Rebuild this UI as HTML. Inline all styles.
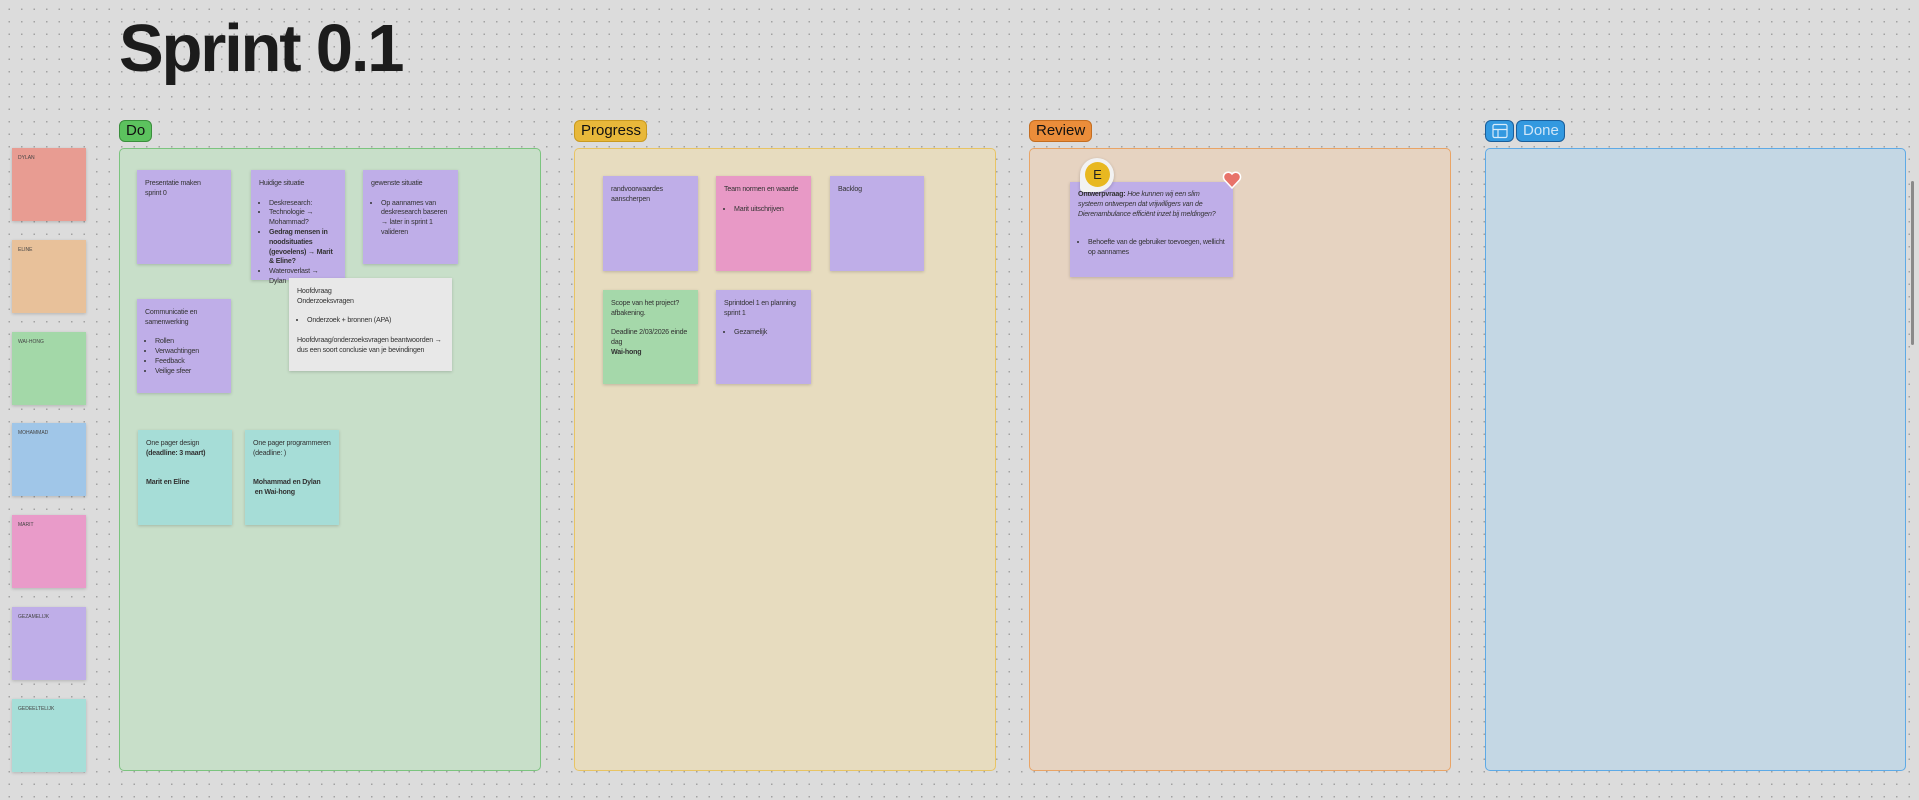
<!DOCTYPE html>
<html><head><meta charset="utf-8"><style>
*{margin:0;padding:0;box-sizing:border-box}
body{width:1919px;height:800px;overflow:hidden;background-color:#dcdcdc;background-image:radial-gradient(circle,#a2a2a2 0.7px,transparent 1px);background-size:12.5px 12.5px;background-position:3px 3px;font-family:"Liberation Sans",sans-serif;color:#222;position:relative}
.a{position:absolute}
h1{position:absolute;left:119px;top:4px;font-size:67px;font-weight:bold;letter-spacing:-2.2px;color:#1c1c1c;line-height:90px}
.lbl{position:absolute;top:120px;height:22px;border-radius:6px;font-size:15px;line-height:20px;padding:0 6px;border:1px solid}
.board{position:absolute;top:148px;height:623px;border:1.5px solid;border-radius:5px}
.s{position:absolute;padding:9px 8px;font-size:7.1px;letter-spacing:-0.2px;line-height:9.8px;color:#333;box-shadow:0 1px 3px rgba(0,0,0,.18)}
.s ul{padding-left:10px;margin-top:9.8px}
.p{background:#bfaee8}
.side{position:absolute;left:12px;width:74px;height:73px;box-shadow:0 1px 3px rgba(0,0,0,.18);font-size:5px;padding:7px 6px;color:#444}
</style></head><body>
<h1>Sprint 0.1</h1>

<div class="side" style="top:148px;background:#e89c92">DYLAN</div>
<div class="side" style="top:240px;background:#e8c19a">ELINE</div>
<div class="side" style="top:332px;background:#a3d8a8">WAI-HONG</div>
<div class="side" style="top:423px;background:#a0c6e8">MOHAMMAD</div>
<div class="side" style="top:515px;background:#e99bc9">MARIT</div>
<div class="side" style="top:607px;background:#bfaee8">GEZAMELIJK</div>
<div class="side" style="top:699px;background:#a6ded8">GEDEELTELIJK</div>

<div class="lbl" style="left:119px;width:33px;background:#5cc25e;border-color:#3a8e3c;color:#111">Do</div>
<div class="lbl" style="left:574px;width:73px;background:#e8b83a;border-color:#c99a20;color:#111">Progress</div>
<div class="lbl" style="left:1029px;width:63px;background:#eb8d3a;border-color:#c46d20;color:#111">Review</div>
<div class="lbl" style="left:1485px;width:29px;background:#3399e0;border-color:#1a5e9a;padding:0">
<svg width="27" height="20" viewBox="0 0 27 20"><rect x="7" y="3.5" width="14" height="13" rx="1.5" fill="none" stroke="#d8ecfa" stroke-width="1.2"/><path d="M7 8.5H21M12 8.5V16.5" stroke="#d8ecfa" stroke-width="1.2"/></svg></div>
<div class="lbl" style="left:1516px;width:49px;background:#3399e0;border-color:#1a5e9a;color:#cfe6f8">Done</div>

<div class="board" style="left:119px;width:422px;background:#c8dfc9;border-color:#7cc47f"></div>
<div class="board" style="left:574px;width:422px;background:#e7dcbf;border-color:#e8c464"></div>
<div class="board" style="left:1029px;width:422px;background:#e6d3c1;border-color:#e9a466"></div>
<div class="board" style="left:1485px;width:421px;background:#c4d7e4;border-color:#5eaae6"></div>
<div class="a" style="left:1911px;top:181px;width:3px;height:164px;background:#8a8a8a;border-radius:2px"></div>

<div class="s p" style="left:137px;top:170px;width:94px;height:94px">Presentatie maken<br>sprint 0</div>
<div class="s p" style="left:251px;top:170px;width:94px;height:110px">Huidige situatie<ul><li>Deskresearch:</li><li>Technologie → Mohammad?</li><li><b>Gedrag mensen in noodsituaties (gevoelens) → Marit &amp; Eline?</b></li><li>Wateroverlast → Dylan</li></ul></div>
<div class="s p" style="left:363px;top:170px;width:95px;height:94px">gewenste situatie<ul><li>Op aannames van deskresearch baseren → later in sprint 1 valideren</li></ul></div>
<div class="s p" style="left:137px;top:299px;width:94px;height:94px">Communicatie en samenwerking<ul><li>Rollen</li><li>Verwachtingen</li><li>Feedback</li><li>Veilige sfeer</li></ul></div>
<div class="s" style="left:289px;top:278px;width:163px;height:93px;background:#e8e8e8">Hoofdvraag<br>Onderzoeksvragen<ul><li>Onderzoek + bronnen (APA)</li></ul><p style="margin-top:9.8px">Hoofdvraag/onderzoeksvragen beantwoorden → dus een soort conclusie van je bevindingen</p></div>
<div class="s" style="left:138px;top:430px;width:94px;height:95px;background:#a6ddd7">One pager design<br><b>(deadline: 3 maart)</b><br><br><br><b>Marit en Eline</b></div>
<div class="s" style="left:245px;top:430px;width:94px;height:95px;background:#a6ddd7">One pager programmeren (deadline: )<br><br><br><b>Mohammad en Dylan &nbsp;en Wai-hong</b></div>

<div class="s p" style="left:603px;top:176px;width:95px;height:95px">randvoorwaardes aanscherpen</div>
<div class="s" style="left:716px;top:176px;width:95px;height:95px;background:#e899c6">Team normen en waarde<ul><li>Marit uitschrijven</li></ul></div>
<div class="s p" style="left:830px;top:176px;width:94px;height:95px">Backlog</div>
<div class="s" style="left:603px;top:290px;width:95px;height:94px;background:#a5d8aa">Scope van het project? afbakening.<br><br>Deadline 2/03/2026 einde dag<br><b>Wai-hong</b></div>
<div class="s p" style="left:716px;top:290px;width:95px;height:94px">Sprintdoel 1 en planning sprint 1<ul><li>Gezamelijk</li></ul></div>

<div class="s p" style="left:1070px;top:182px;width:163px;height:95px;padding-top:8px"><b>Ontwerpvraag:</b> <i>Hoe kunnen wij een slim systeem ontwerpen dat vrijwilligers van de Dierenambulance efficiënt inzet bij meldingen?</i><ul style="margin-top:19px"><li>Behoefte van de gebruiker toevoegen, wellicht op aannames</li></ul></div>
<div class="a" style="left:1080px;top:158px;width:34px;height:34px;border-radius:50% 50% 50% 4px;background:#f2f2f2;box-shadow:0 1px 3px rgba(0,0,0,.2)"></div>
<div class="a" style="left:1085px;top:162px;width:25px;height:25px;border-radius:50%;background:#e8b820;font-size:13px;line-height:25px;text-align:center;color:#222">E</div>
<svg class="a" style="left:1222px;top:170px" width="20" height="20" viewBox="0 0 20 20"><path d="M10 18 L2.5 10 A4.5 4.5 0 0 1 10 4 A4.5 4.5 0 0 1 17.5 10 Z" fill="#e8736a" stroke="#fff" stroke-width="1.5"/></svg>
</body></html>
